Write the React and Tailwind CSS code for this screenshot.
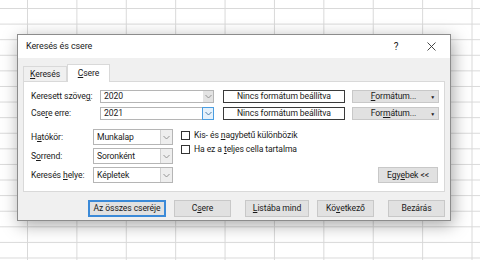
import React from "react";

const U = ({ children }) => <span className="underline underline-offset-[1px] decoration-[0.5px]">{children}</span>;

const Chevron = ({ color = "#606060" }) => (
  <svg width="7" height="5" viewBox="0 0 7 5">
    <path d="M0.5 1 L3.5 4 L6.5 1" fill="none" stroke={color} strokeWidth="0.9" />
  </svg>
);

const Combo = ({ value, active }) => (
  <div className="flex h-[13px] w-[114px] border border-[#b5b5b5] bg-white">
    <div className="flex-1 pl-[3px] leading-[11px]">{value}</div>
    <div
      className={
        active
          ? "-m-px flex h-[13px] w-[12px] items-center justify-center border border-[#4a9de0] bg-[#e5f1fb]"
          : "flex w-[10px] items-center justify-center bg-[#e3e3e3]"
      }
    >
      <Chevron color={active ? "#3a6f9e" : "#8a8a8a"} />
    </div>
  </div>
);

const Select = ({ value }) => (
  <div className="flex h-[16px] w-[80px] border border-[#b5b5b5] bg-white">
    <div className="flex-1 pl-[3px] leading-[14px]">{value}</div>
    <div className="flex w-[12px] items-center justify-center border-l border-[#d0d0d0] bg-[#eeeeee]">
      <Chevron color="#8a8a8a" />
    </div>
  </div>
);

const FmtBtn = ({ children }) => (
  <div className="relative flex h-[13px] w-[87px] items-center justify-center border border-[#c8c8c8] bg-[#e1e1e1] leading-[11px]">
    <span className="pr-[4px]">{children}</span>
    <span className="absolute right-[3px] top-[1px] text-[5px] leading-[11px]">▼</span>
  </div>
);

const Btn = ({ w, children, def }) => (
  <div
    className={
      "flex h-[17px] items-center justify-center whitespace-nowrap leading-[15px] " +
      (def ? "border-2 border-[#3b8ad8] bg-[#e1e1e1]" : "border border-[#c8c8c8] bg-[#e1e1e1]")
    }
    style={{ width: w }}
  >
    {children}
  </div>
);

export default function App() {
  return (
    <div
      className="relative h-[260px] w-[480px] overflow-hidden bg-white text-[8.6px] tracking-[-0.1px] text-[#1a1a1a] bg-[linear-gradient(to_right,#d9d9d9_1px,transparent_1px),linear-gradient(to_bottom,#d9d9d9_1px,transparent_1px)] bg-[size:49.4px_15.6px] bg-[position:27px_8px]"
      style={{ fontFamily: 'Roboto, "Noto Sans", sans-serif' }}
    >
      <div className="absolute left-[17px] top-[34px] flex h-[187px] w-[434px] flex-col border border-[#8c8c8c] bg-[#f0f0f0] shadow-[2px_4px_16px_rgba(0,0,0,0.35)]">
        {/* title bar */}
        <div className="flex h-[23px] items-center bg-white pl-[8px] pr-[14px]">
          <div className="flex-1 text-[9px]">Keresés és csere</div>
          <div className="w-[10px] text-center text-[10px]">?</div>
          <div className="ml-[26px] flex w-[9px] justify-center">
            <svg width="9" height="9" viewBox="0 0 9 9">
              <path d="M0.5 0.5 L8.5 8.5 M8.5 0.5 L0.5 8.5" stroke="#333" strokeWidth="0.9" />
            </svg>
          </div>
        </div>
        {/* body */}
        <div className="flex flex-1 flex-col px-[5px] pt-[6px]">
          {/* tabs */}
          <div className="flex h-[17px] items-end">
            <div className="flex h-[15px] w-[44px] items-center justify-center border border-b-0 border-[#d9d9d9] bg-[#f0f0f0]">
              <span>
                <U>K</U>eresés
              </span>
            </div>
            <div className="relative -mb-px flex h-[18px] w-[43px] items-center justify-center border border-b-0 border-[#d9d9d9] bg-white">
              <span>
                <U>C</U>sere
              </span>
            </div>
          </div>
          <div className="flex h-[111px] flex-col border border-[#d9d9d9] bg-white pl-[7px] pr-[5px] pt-[8px]">
            <div className="flex h-[13px] items-center">
              <div className="w-[69px] whitespace-nowrap">
                Keresett szöve<U>g</U>:
              </div>
              <Combo value="2020" />
              <div className="ml-[9px] flex h-[13px] w-[122px] items-center justify-center whitespace-nowrap border border-[#3a3a3a] leading-[11px]">
                Nincs formátum beállítva
              </div>
              <div className="ml-[7px]">
                <FmtBtn>
                  <U>F</U>ormátum...
                </FmtBtn>
              </div>
            </div>
            <div className="mt-[4px] flex h-[13px] items-center">
              <div className="w-[69px] whitespace-nowrap">
                Cse<U>r</U>e erre:
              </div>
              <Combo value="2021" active />
              <div className="ml-[9px] flex h-[13px] w-[122px] items-center justify-center whitespace-nowrap border border-[#3a3a3a] leading-[11px]">
                Nincs formátum beállítva
              </div>
              <div className="ml-[7px]">
                <FmtBtn>
                  For<U>m</U>átum...
                </FmtBtn>
              </div>
            </div>
            <div className="mt-[9px] flex">
              <div className="flex flex-col gap-[3px]">
                <div className="flex items-center">
                  <div className="w-[62px] whitespace-nowrap">
                    H<U>a</U>tókör:
                  </div>
                  <Select value="Munkalap" />
                </div>
                <div className="flex items-center">
                  <div className="w-[62px] whitespace-nowrap">
                    S<U>o</U>rrend:
                  </div>
                  <Select value="Soronként" />
                </div>
                <div className="flex items-center">
                  <div className="w-[62px] whitespace-nowrap">
                    Keresés <U>h</U>elye:
                  </div>
                  <Select value="Képletek" />
                </div>
              </div>
              <div className="ml-[8px] flex flex-col gap-[5px] pt-[2px]">
                <div className="flex items-center">
                  <div className="h-[9px] w-[9px] border border-[#333] bg-white" />
                  <div className="ml-[4px] whitespace-nowrap leading-[9px]">
                    Kis- és <U>n</U>agybetű különbözik
                  </div>
                </div>
                <div className="flex items-center">
                  <div className="h-[9px] w-[9px] border border-[#333] bg-white" />
                  <div className="ml-[4px] whitespace-nowrap leading-[9px]">
                    Ha ez a <U>t</U>eljes cella tartalma
                  </div>
                </div>
              </div>
              <div className="flex flex-1 items-end justify-end pr-[1px]">
                <div className="flex h-[16px] w-[60px] items-center justify-center whitespace-nowrap border border-[#c8c8c8] bg-[#e1e1e1] leading-[14px]">
                  Egy<U>e</U>bek &lt;&lt;
                </div>
              </div>
            </div>
          </div>
          {/* buttons */}
          <div className="mt-[8px] flex justify-end">
            <Btn w={78} def>
              Az összes cseréje
            </Btn>
            <div className="w-[8px]" />
            <Btn w={57}>
              C<U>s</U>ere
            </Btn>
            <div className="w-[14px]" />
            <Btn w={64}>
              <U>L</U>istába mind
            </Btn>
            <div className="w-[8px]" />
            <Btn w={57}>
              Kö<U>v</U>etkező
            </Btn>
            <div className="w-[14px]" />
            <Btn w={57}>Bezárás</Btn>
          </div>
        </div>
      </div>
    </div>
  );
}
